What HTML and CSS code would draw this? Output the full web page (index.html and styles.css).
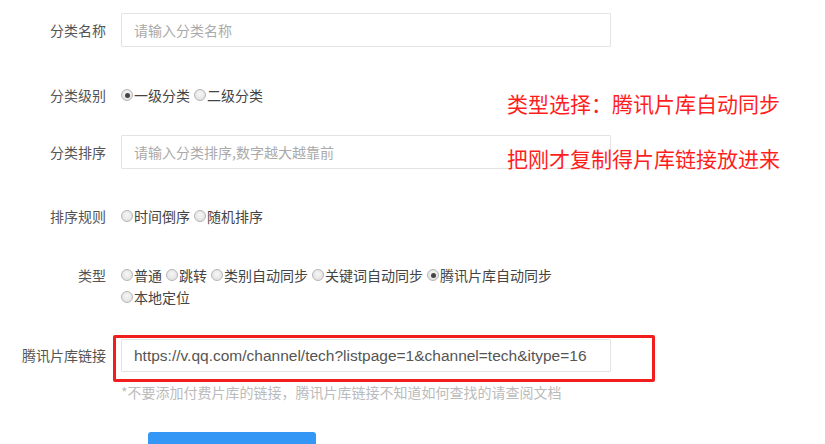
FILE: index.html
```html
<!DOCTYPE html>
<html lang="zh-CN">
<head>
<meta charset="utf-8">
<title>分类设置</title>
<link rel="stylesheet" href="styles.css">
</head>
<body>
<div class="page">
  <form class="form">
    <div class="row row-name">
      <label class="label">分类名称</label>
      <div class="field"><input class="input" type="text" placeholder="请输入分类名称"></div>
    </div>
    <div class="row row-level">
      <label class="label">分类级别</label>
      <div class="field radios">
        <label class="radio"><input type="radio" name="level" checked><span>一级分类</span></label>
        <label class="radio"><input type="radio" name="level"><span>二级分类</span></label>
      </div>
    </div>
    <div class="row row-sort">
      <label class="label">分类排序</label>
      <div class="field"><input class="input" type="text" placeholder="请输入分类排序,数字越大越靠前"></div>
    </div>
    <div class="row row-rule">
      <label class="label">排序规则</label>
      <div class="field radios">
        <label class="radio"><input type="radio" name="rule"><span>时间倒序</span></label>
        <label class="radio"><input type="radio" name="rule"><span>随机排序</span></label>
      </div>
    </div>
    <div class="row row-type">
      <label class="label">类型</label>
      <div class="field radios wrap">
        <label class="radio"><input type="radio" name="type"><span>普通</span></label>
        <label class="radio"><input type="radio" name="type"><span>跳转</span></label>
        <label class="radio"><input type="radio" name="type"><span>类别自动同步</span></label>
        <label class="radio"><input type="radio" name="type"><span>关键词自动同步</span></label>
        <label class="radio"><input type="radio" name="type" checked><span>腾讯片库自动同步</span></label>
        <label class="radio"><input type="radio" name="type"><span>本地定位</span></label>
      </div>
    </div>
    <div class="row row-link">
      <label class="label">腾讯片库链接</label>
      <div class="field">
        <input class="input input-value" type="text" value="https://v.qq.com/channel/tech?listpage=1&amp;channel=tech&amp;itype=16">
        <div class="help">*不要添加付费片库的链接，腾讯片库链接不知道如何查找的请查阅文档</div>
      </div>
      <div class="highlight"></div>
    </div>
    <div class="actions">
      <button class="btn" type="button">提交</button>
    </div>
  </form>
  <div class="note note-1">类型选择：腾讯片库自动同步</div>
  <div class="note note-2">把刚才复制得片库链接放进来</div>
</div>
</body>
</html>
```

FILE: styles.css
```css
* { box-sizing: border-box; }
html, body {
  margin: 0;
  padding: 0;
  background: #fff;
  height: 444px;
  overflow: hidden;
}
body {
  font-family: "Noto Sans CJK SC", "Noto Sans", sans-serif;
  font-size: 14px;
  color: #555;
}
.page {
  position: relative;
  width: 825px;
  height: 444px;
}
.form {
  padding-top: 13px;
  display: flex;
  flex-direction: column;
}
.row {
  position: relative;
  display: flex;
  align-items: center;
}
.label {
  width: 121px;
  padding-right: 15px;
  text-align: right;
  color: #555;
  line-height: 20px;
  flex: none;
}
.field {
  width: 490px;
}
.row-name { height: 34px; }
.row-level { height: 34px; margin-top: 31px; }
.row-sort { height: 34px; margin-top: 23px; }
.row-rule { height: 34px; margin-top: 30px; }
.row-type { margin-top: 31px; align-items: flex-start; }
.row-type .label { line-height: 22px; }
.row-link { margin-top: 31px; align-items: flex-start; }
.row-link .label { line-height: 33px; }

.input {
  display: block;
  width: 490px;
  height: 34px;
  border: 1px solid #e3e3e3;
  border-radius: 1px;
  padding: 0 12px;
  font-family: "Noto Sans CJK SC", sans-serif;
  font-size: 14px;
  color: #444;
  outline: none;
  background: #fff;
}
.input::placeholder { color: #aaa; }
.input-value {
  height: 33px;
  font-family: "Liberation Sans", "Noto Sans CJK SC", sans-serif;
  font-size: 15.5px;
  color: #555;
}
.help {
  margin-top: 10px;
  line-height: 20px;
  color: #bbb;
  white-space: nowrap;
}

.radios {
  display: flex;
  align-items: center;
}
.radios.wrap { flex-wrap: wrap; }
.radio {
  display: inline-flex;
  align-items: center;
  line-height: 22px;
  margin-right: 4px;
  color: #444;
}
.radio input {
  appearance: none;
  -webkit-appearance: none;
  margin: 0 1px 0 0;
  width: 12px;
  height: 12px;
  border-radius: 50%;
  border: 1px solid #b5b5b5;
  background: radial-gradient(circle at 50% 40%, #f6f6f6 0%, #dcdcdc 100%);
  position: relative;
  flex: none;
}
.radio input:checked::after {
  content: "";
  position: absolute;
  left: 2.5px;
  top: 2.5px;
  width: 5px;
  height: 5px;
  border-radius: 50%;
  background: #444;
}

.highlight {
  position: absolute;
  left: 113px;
  top: -4px;
  width: 542px;
  height: 47px;
  border: 3px solid #f21d1d;
  border-radius: 2px;
  pointer-events: none;
}

.actions {
  padding-left: 148px;
  margin-top: 30px;
}
.btn {
  width: 168px;
  height: 36px;
  border: none;
  border-radius: 3px;
  background: #3597f5;
  color: #fff;
  font-family: "Noto Sans CJK SC", sans-serif;
  font-size: 14px;
}

.note {
  position: absolute;
  left: 507px;
  font-size: 21px;
  line-height: 24px;
  color: #ff1e1e;
  white-space: nowrap;
}
.note-1 { top: 91px; }
.note-2 { top: 146px; }
```
